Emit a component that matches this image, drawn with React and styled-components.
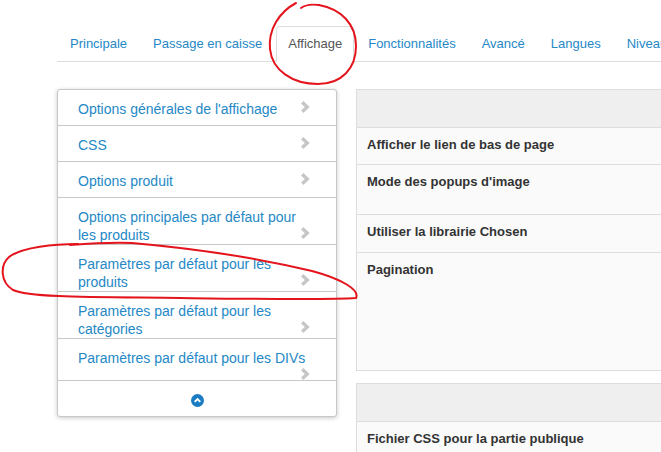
import React from 'react';
import styled, { createGlobalStyle } from 'styled-components';

const LINK = '#2588c6';

const tabs = [
  'Principale',
  'Passage en caisse',
  'Affichage',
  'Fonctionnalités',
  'Avancé',
  'Langues',
  'Niveaux',
];

const menu = [
  "Options générales de l'affichage",
  'CSS',
  'Options produit',
  'Options principales par défaut pour les produits',
  'Paramètres par défaut pour les produits',
  'Paramètres par défaut pour les catégories',
  'Paramètres par défaut pour les DIVs',
];

const settings = [
  { label: 'Afficher le lien de bas de page', height: 37 },
  { label: "Mode des popups d'image", height: 50 },
  { label: 'Utiliser la librairie Chosen', height: 38 },
  { label: 'Pagination', height: 117, last: true },
];

const Chevron = () => (
  <ChevronIcon width="10" height="12" viewBox="0 0 10 12">
    <polyline
      points="2.2,1.3 7.2,6 2.2,10.7"
      fill="none"
      stroke="#c6c6c6"
      strokeWidth="3.4"
      strokeLinejoin="miter"
    />
  </ChevronIcon>
);

const App = () => {
  return (
    <Page>
      <GlobalStyle />
      <Tabs>
        {tabs.map((t) => (
          <Tab key={t} active={t === 'Affichage'}>
            {t}
          </Tab>
        ))}
      </Tabs>

      <Content>
        <Menu>
          {menu.map((m) => (
            <MenuRow key={m}>
              {m}
              <Chevron />
            </MenuRow>
          ))}
          <MenuFooter>
            <svg width="13" height="13" viewBox="0 0 13 13">
              <circle cx="6.5" cy="6.5" r="6.5" fill="#1b7cc4" />
              <polyline
                points="3.7,7.9 6.5,5.1 9.3,7.9"
                fill="none"
                stroke="#fff"
                strokeWidth="2"
              />
            </svg>
          </MenuFooter>
        </Menu>

        <Column>
          <Panel>
            <PanelHead />
            {settings.map((s) => (
              <PanelRow key={s.label} h={s.height} last={s.last}>
                {s.label}
              </PanelRow>
            ))}
          </Panel>
          <Panel>
            <PanelHead />
            <PanelRow h={40} last>
              Fichier CSS pour la partie publique
            </PanelRow>
          </Panel>
        </Column>
      </Content>

      {/* annotations à main levée */}
      <Marks width="661" height="452" viewBox="0 0 661 452">
        <path d="M296,3 C279,12 268,30 270,49 C272,70 292,84 318,84 C342,84 356,68 356,46 C356,24 341,9 319,5 C311,4 305,5 301,8" />
        <path d="M78,244 C55,244 22,247 9,257 C0,265 0,282 13,290 C30,298 100,297 180,298 C260,299 330,300 356,298 C360,290 342,279 312,271 C262,259 200,249 132,243 C112,242 96,243 70,245" />
      </Marks>
    </Page>
  );
};

export default App;

const GlobalStyle = createGlobalStyle`
  body {
    margin: 0;
    background: #fff;
    font-family: "Liberation Sans", Arial, sans-serif;
    overflow: hidden;
  }
`;

const Page = styled.div`
  position: relative;
  width: 661px;
  height: 452px;
  overflow: hidden;
  box-sizing: border-box;
  padding: 26px 0 0 57px;
`;

const Tabs = styled.ul`
  display: flex;
  margin: 0;
  padding: 0 0 0 1px;
  list-style: none;
  white-space: nowrap;
  border-bottom: 1px solid #ddd;
`;

const Tab = styled.li`
  flex: none;
  padding: 9px 11px 10px;
  margin: 0 2px -1px 0;
  font-size: 13px;
  line-height: 15px;
  border: 1px solid transparent;
  border-radius: 4px 4px 0 0;
  color: ${(p) => (p.active ? '#555' : LINK)};
  ${(p) => p.active && 'background: #fff; border-color: #ddd #ddd transparent;'}
`;

const Content = styled.div`
  display: flex;
  gap: 19px;
  margin-top: 27px;
`;

const Menu = styled.div`
  flex: none;
  align-self: flex-start;
  width: 280px;
  box-sizing: border-box;
  background: #fff;
  border: 1px solid #c8c8c8;
  border-radius: 3px;
  box-shadow: 0 1px 4px rgba(0, 0, 0, 0.22);
`;

const MenuRow = styled.div`
  display: flow-root;
  box-sizing: border-box;
  min-height: 36px;
  padding: 10px 26px 0 20px;
  border-bottom: 1px solid #c8c8c8;
  font-size: 14px;
  line-height: 18px;
  color: ${LINK};
`;

const ChevronIcon = styled.svg`
  float: right;
  display: block;
  margin-top: 1px;
`;

const MenuFooter = styled.div`
  display: flex;
  justify-content: center;
  align-items: center;
  height: 35px;
  padding-top: 3px;
  box-sizing: border-box;
`;

const Column = styled.div`
  flex: 0 0 420px;
  display: flex;
  flex-direction: column;
  gap: 12px;
`;

const Panel = styled.div`
  background: #fafafa;
  border: 1px solid #ddd;
`;

const PanelHead = styled.div`
  height: 37px;
  background: #efefef;
  border-bottom: 1px solid #ddd;
`;

const PanelRow = styled.div`
  box-sizing: border-box;
  min-height: ${(p) => p.h}px;
  padding: 8px 10px 0;
  font-size: 13px;
  line-height: 18px;
  font-weight: bold;
  color: #333;
  border-bottom: ${(p) => (p.last ? 'none' : '1px solid #ddd')};
`;

const Marks = styled.svg`
  position: absolute;
  left: 0;
  top: 0;
  pointer-events: none;

  path {
    fill: none;
    stroke: #e3141c;
    stroke-width: 2;
    stroke-linecap: round;
  }
`;
